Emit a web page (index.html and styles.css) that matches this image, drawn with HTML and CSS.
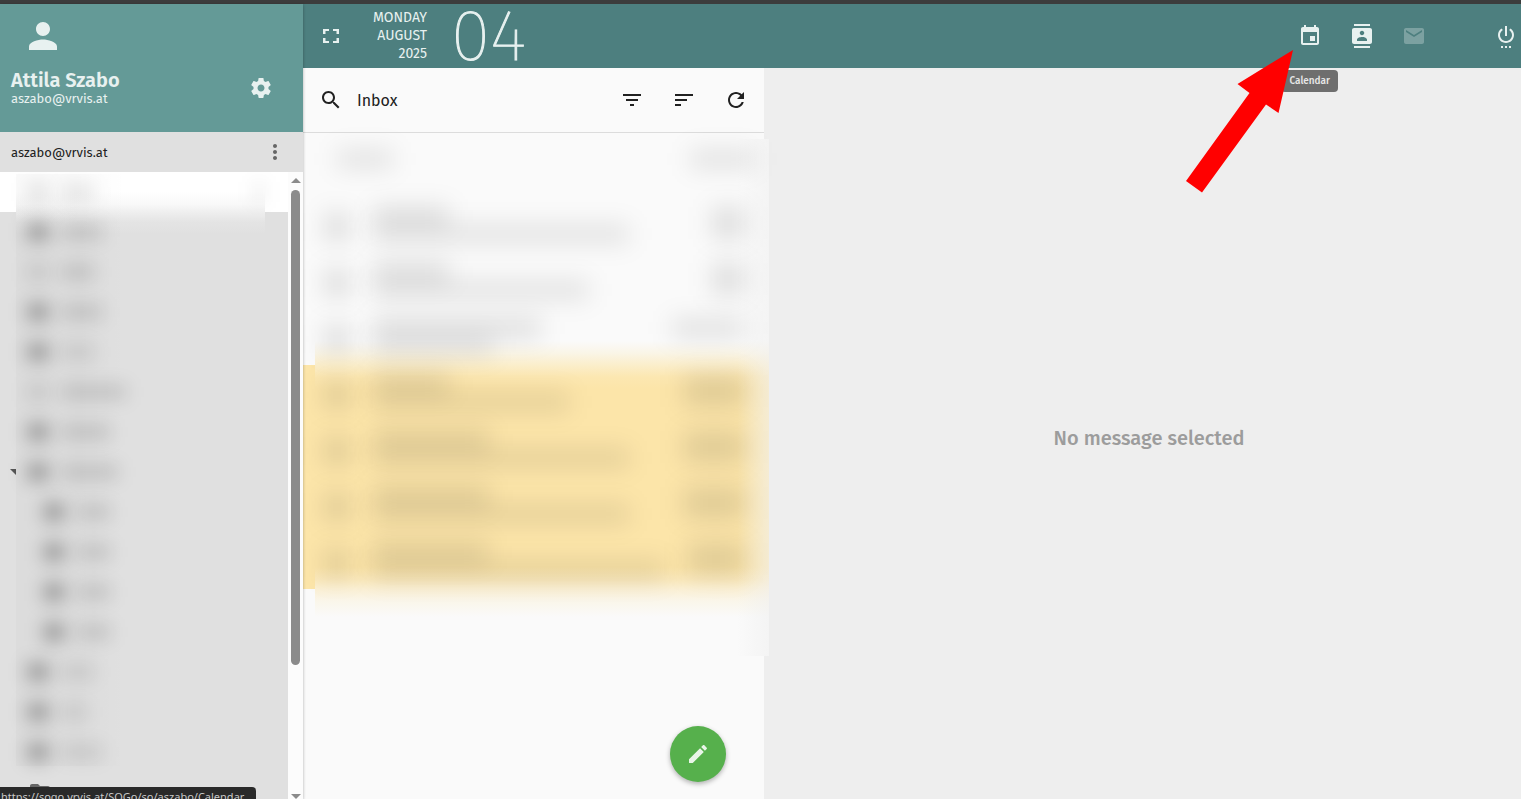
FILE: index.html
```html
<!DOCTYPE html>
<html lang="en">
<head>
<meta charset="utf-8">
<title>Inbox</title>
<link rel="stylesheet" href="styles.css">
</head>
<body>
<div class="app">
  <aside class="sidebar">
    <header class="profile">
      <svg class="avatar" viewBox="0 0 24 24" aria-hidden="true"><path d="M12 12c2.200 0 4-1.800 4-4s-1.800-4-4-4-4 1.800-4 4 1.800 4 4 4zm0 2c-2.700 0-8 1.300-8 4v2h16v-2c0-2.700-5.300-4-8-4z"/></svg>
      <div class="profile-row">
        <div class="identity">
          <strong class="name">Attila Szabo</strong>
          <span class="email">aszabo@vrvis.at</span>
        </div>
        <button class="icon-button light" aria-label="Preferences"><svg viewBox="0 0 24 24"><path d="M19.430 12.980c.04-.32.07-.64.07-.98s-.03-.66-.07-.98l2.110-1.650c.19-.15.24-.42.12-.64l-2-3.460c-.12-.22-.39-.3-.61-.22l-2.490 1c-.52-.4-1.080-.73-1.690-.98l-.38-2.650C14.460 2.180 14.250 2 14 2h-4c-.25 0-.46.18-.49.42l-.38 2.650c-.61.25-1.170.59-1.690.98l-2.490-1c-.23-.09-.49 0-.61.22l-2 3.460c-.13.22-.07.49.12.64l2.110 1.650c-.04.32-.07.65-.07.98s.03.66.07.98l-2.110 1.650c-.19.15-.24.42-.12.64l2 3.460c.12.22.39.3.61.22l2.490-1c.52.4 1.080.73 1.690.98l.38 2.650c.03.24.24.42.49.42h4c.25 0 .46-.18.49-.42l.38-2.650c.61-.25 1.170-.59 1.690-.98l2.490 1c.23.09.49 0 .61-.22l2-3.460c.12-.22.07-.49-.12-.64l-2.110-1.650zM12 15.500c-1.930 0-3.500-1.570-3.500-3.500s1.570-3.500 3.500-3.500 3.500 1.570 3.500 3.500-1.570 3.500-3.500 3.500z"/></svg></button>
      </div>
    </header>
    <div class="account">
      <span>aszabo@vrvis.at</span>
      <button class="icon-button more" aria-label="Account options"><svg viewBox="0 0 24 24"><path d="M12 8c1.100 0 2-.9 2-2s-.9-2-2-2-2 .9-2 2 .9 2 2 2zm0 2c-1.100 0-2 .9-2 2s.9 2 2 2 2-.9 2-2-.9-2-2-2zm0 6c-1.100 0-2 .9-2 2s.9 2 2 2 2-.9 2-2-.9-2-2-2z"/></svg></button>
    </div>
    <div class="folders">
      <div class="folder-veil"></div>
      <ul class="folder-list">
        <li class="active"><i class="pic pale"></i><i class="bar w32 pale"></i><i class="dots"></i></li>
        <li><i class="pic"></i><i class="bar w40"></i></li>
        <li><i class="pic pale"></i><i class="bar w32"></i></li>
        <li><i class="pic"></i><i class="bar w40"></i></li>
        <li><i class="pic"></i><i class="bar w32 pale"></i></li>
        <li><i class="pic pale"></i><i class="bar w64"></i></li>
        <li><i class="pic"></i><i class="bar w48"></i></li>
        <li class="open"><i class="pic"></i><i class="bar w56"></i></li>
        <li class="child"><i class="pic"></i><i class="bar w32"></i></li>
        <li class="child"><i class="pic"></i><i class="bar w32"></i></li>
        <li class="child"><i class="pic"></i><i class="bar w32"></i></li>
        <li class="child"><i class="pic"></i><i class="bar w32"></i></li>
        <li><i class="pic"></i><i class="bar w32 pale"></i></li>
        <li><i class="pic"></i><i class="bar w24 pale"></i></li>
        <li><i class="pic"></i><i class="bar w40 pale"></i></li>
        <li><svg class="folder" viewBox="0 0 24 24" aria-hidden="true"><path d="M10 4H4c-1.100 0-2 .9-2 2v12c0 1.100.9 2 2 2h16c1.100 0 2-.9 2-2V8c0-1.100-.9-2-2-2h-8z"/></svg></li>
      </ul>
      <div class="scrollbar"><i class="arrow up"></i><i class="thumb"></i><i class="arrow down"></i></div>
    </div>
  </aside>
  <div class="main">
    <header class="toolbar">
      <button class="icon-button light" aria-label="Full screen"><svg viewBox="0 0 24 24"><path d="M4 14v5h6v-2H6.500v-3zM4 10h2.500V7H10V5H4zM17.500 14v3H14v2h6v-5zM14 5v2h3.500v3H20V5z"/></svg></button>
      <div class="date"><span>MONDAY</span><span>AUGUST</span><span>2025</span></div>
      <div class="day">04</div>
      <nav class="modules">
        <a class="icon-button light calendar" href="#calendar" aria-label="Calendar"><svg viewBox="0 0 24 24"><path d="M17 12h-5v5h5zM16 1v2H8V1H6v2H5c-1.110 0-2 .9-2 2v14c0 1.100.89 2 2 2h14c1.100 0 2-.9 2-2V5c0-1.100-.9-2-2-2h-1V1zm3 18H5V8h14z"/></svg><span class="tooltip">Calendar</span></a>
        <a class="icon-button light" href="#contacts" aria-label="Address book"><svg viewBox="0 0 24 24"><path d="M20 0H4v2h16zM4 24h16v-2H4zM20 4H4c-1.100 0-2 .9-2 2v12c0 1.100.9 2 2 2h16c1.100 0 2-.9 2-2V6c0-1.100-.9-2-2-2zm-8 2.750c1.240 0 2.250 1.010 2.250 2.250s-1.010 2.250-2.250 2.250S9.750 10.240 9.750 9 10.760 6.750 12 6.750zM17 17H7v-1.500c0-1.670 3.330-2.500 5-2.500s5 .83 5 2.500z"/></svg></a>
        <a class="icon-button light dim" href="#mail" aria-label="Mail"><svg viewBox="0 0 24 24"><path d="M20 4H4c-1.100 0-2 .9-2 2v12c0 1.100.9 2 2 2h16c1.100 0 2-.9 2-2V6c0-1.100-.9-2-2-2zm0 4l-8 5-8-5V6l8 5 8-5z"/></svg></a>
      </nav>
      <button class="icon-button light" aria-label="Log out"><svg viewBox="0 0 24 24"><path d="M7 24h2v-2H7zm4 0h2v-2h-2zm2-22h-2v10h2zm3.560 2.440l-1.450 1.450C16.840 6.940 18 8.830 18 11c0 3.310-2.690 6-6 6s-6-2.690-6-6c0-2.170 1.160-4.060 2.880-5.120L7.440 4.440C5.360 5.880 4 8.280 4 11c0 4.420 3.580 8 8 8s8-3.580 8-8c0-2.720-1.360-5.120-3.440-6.560zM15 24h2v-2h-2z"/></svg></button>
    </header>
    <div class="panes">
      <section class="list-pane">
        <header class="list-header">
          <button class="icon-button" aria-label="Search"><svg viewBox="0 0 24 24"><path d="M15.500 14h-.79l-.28-.27C15.410 12.590 16 11.110 16 9.500 16 5.910 13.090 3 9.500 3S3 5.910 3 9.500 5.910 16 9.500 16c1.610 0 3.090-.59 4.230-1.570l.27.28v.79l5 4.990L20.490 19zm-6 0C7.010 14 5 11.990 5 9.500S7.010 5 9.500 5 14 7.010 14 9.500 11.990 14 9.500 14z"/></svg></button>
          <h1 class="title">Inbox</h1>
          <button class="icon-button" aria-label="Filter"><svg viewBox="0 0 24 24"><path d="M10 18h4v-2h-4zM3 6v2h18V6zm3 7h12v-2H6z"/></svg></button>
          <button class="icon-button" aria-label="Sort"><svg viewBox="0 0 24 24"><path d="M3 18h6v-2H3zM3 6v2h18V6zm0 7h12v-2H3z"/></svg></button>
          <button class="icon-button" aria-label="Refresh"><svg viewBox="0 0 24 24"><path d="M17.650 6.350C16.200 4.900 14.210 4 12 4c-4.420 0-7.990 3.580-7.990 8s3.570 8 7.990 8c3.730 0 6.840-2.550 7.730-6h-2.080c-.82 2.330-3.040 4-5.650 4-3.310 0-6-2.690-6-6s2.690-6 6-6c1.660 0 3.140.69 4.220 1.780L13 11h7V4z"/></svg></button>
        </header>
        <div class="messages">
          <div class="message-veil"></div>
          <div class="count-row"><i class="line c1"></i><i class="line c2"></i></div>
          <ul class="message-list">
            <li><i class="face"></i><div class="lines"><i class="line strong s1"></i><i class="line m4"></i></div><i class="stamp"></i></li>
            <li><i class="face"></i><div class="lines"><i class="line strong s1"></i><i class="line m3"></i></div><i class="stamp"></i></li>
            <li><i class="face"></i><div class="lines"><i class="line strong s3"></i><i class="line m1"></i></div><i class="stamp wide"></i></li>
            <li class="unread"><i class="face"></i><div class="lines"><i class="line strong s1"></i><i class="line m2"></i></div><i class="stamp mid"></i></li>
            <li class="unread"><i class="face"></i><div class="lines"><i class="line strong s2"></i><i class="line m4"></i></div><i class="stamp mid"></i></li>
            <li class="unread"><i class="face"></i><div class="lines"><i class="line strong s2"></i><i class="line m4"></i></div><i class="stamp mid"></i></li>
            <li class="unread"><i class="face"></i><div class="lines"><i class="line strong s2"></i><i class="line m5"></i></div><i class="stamp mid"></i></li>
          </ul>
        </div>
        <button class="compose" aria-label="Write a new message"><svg viewBox="0 0 24 24"><path d="M3 17.250V21h3.750L17.810 9.940l-3.750-3.750zM20.710 7.040c.39-.39.39-1.020 0-1.410l-2.340-2.340c-.39-.39-1.020-.39-1.410 0l-1.830 1.830 3.750 3.750z"/></svg></button>
      </section>
      <main class="reader"><p>No message selected</p></main>
    </div>
  </div>
</div>
<svg class="pointer" viewBox="0 0 110 144" aria-hidden="true"><path d="M108 0L93.500 63 81 54.500 17 142.500 1 131 64.500 43 52.500 34z"/></svg>
<div class="status">https://sogo.vrvis.at/SOGo/so/aszabo/Calendar</div>
</body>
</html>
```
FILE: styles.css
```css
* { box-sizing: border-box; }
body {
  margin: 0;
  height: 100vh;
  overflow: hidden;
  font-family: "Fira Sans", "Noto Sans", sans-serif;
  font-size: 16px;
  color: #212121;
  background: #eee;
}
ul { list-style: none; margin: 0; padding: 0; }
svg { display: block; fill: currentColor; }
.app { display: flex; height: 100vh; border-top: 4px solid #3c3c3c; }

.icon-button {
  display: flex;
  align-items: center;
  justify-content: center;
  flex: none;
  width: 40px;
  height: 40px;
  padding: 0;
  border: 0;
  background: none;
  color: #212121;
}
.icon-button svg { width: 24px; height: 24px; }
.light { color: #e8f1f0; }

.sidebar {
  position: relative;
  z-index: 1;
  flex: none;
  display: flex;
  flex-direction: column;
  width: 303px;
  background: #e0e0e0;
  box-shadow: 0 1px 3px rgba(0, 0, 0, .3);
}
.profile {
  height: 128px;
  padding: 11px 22px 0 11px;
  background: #649a97;
  color: #e8f1f0;
}
.avatar { width: 42px; height: 42px; margin-left: 11px; }
.profile-row { display: flex; justify-content: space-between; align-items: center; height: 62px; }
.identity { display: flex; flex-direction: column; }
.name { font-size: 20px; line-height: 22px; font-weight: 600; }
.email { font-size: 13px; line-height: 16px; }
.account {
  display: flex;
  align-items: center;
  justify-content: space-between;
  height: 40px;
  padding: 0 8px 0 11px;
  font-size: 13px;
}
.more { color: #666; }

.folders { position: relative; display: flex; flex: 1; min-height: 0; overflow: hidden; }
.folder-list { flex: 1; }
.folder-list li { display: flex; align-items: center; gap: 14px; height: 40px; padding-left: 28px; }
.folder-list .active { background: #fff; }
.folder-list .child { padding-left: 44px; }
.folder-list .open { padding-left: 10px; gap: 6px; }
.open::before { content: ""; border: 6px solid transparent; border-top-color: #555; border-bottom: 0; }
.open .bar { margin-left: 8px; }
.pic, .bar, .dots { filter: blur(9px); }
.pic { width: 20px; height: 18px; background: rgba(0, 0, 0, .32); }
.bar { height: 14px; background: rgba(0, 0, 0, .14); }
.pale { background: rgba(0, 0, 0, .1); }
.dots { width: 6px; height: 20px; margin: 0 26px 0 auto; background: rgba(0, 0, 0, .12); }
.w24 { width: 24px; }
.w32 { width: 32px; }
.w40 { width: 40px; }
.w48 { width: 48px; }
.w56 { width: 56px; }
.w64 { width: 64px; }
.folder { width: 24px; height: 24px; color: #666; }

.folder-veil {
  position: absolute;
  top: 2px;
  left: 16px;
  right: 38px;
  height: 592px;
  background:
    linear-gradient(90deg, rgba(0, 0, 0, .02), rgba(0, 0, 0, .02) 60px, transparent 110px),
    linear-gradient(#fff 18px, #f9f9f9 30px, #efefef 38px, #e4e4e4 48px, #e0e0e0 60px);
}

.scrollbar {
  display: flex;
  flex-direction: column;
  align-items: center;
  flex: none;
  width: 15px;
  padding-top: 6px;
  background: #fcfcfc;
}
.arrow { border: 5px solid transparent; }
.up { border-top: 0; border-bottom-color: #8b8b8b; }
.down { border-bottom: 0; border-top-color: #8b8b8b; margin-top: auto; }
.thumb { width: 9px; height: 475px; margin-top: 7px; border-radius: 5px; background: #8b8b8b; }

.main { flex: 1; min-width: 0; display: flex; flex-direction: column; }
.toolbar {
  display: flex;
  align-items: center;
  flex: none;
  height: 64px;
  padding-left: 8px;
  background: #4d7f7f;
  color: #e8f1f0;
}
.toolbar > .icon-button:last-child { margin-right: -5px; }
.date {
  display: flex;
  flex-direction: column;
  width: 76px;
  font-size: 14px;
  line-height: 18px;
  text-align: right;
}
.day {
  margin-left: 24px;
  font-family: "Fira Sans", Lato, sans-serif;
  font-size: 72px;
  line-height: 64px;
  font-weight: 100;
  -webkit-text-stroke: 1px currentColor;
}
.modules { display: flex; gap: 12px; margin-left: auto; margin-right: 52px; }
.calendar { position: relative; text-decoration: none; }
.dim { opacity: .3; }
.tooltip {
  position: absolute;
  top: 54px;
  right: -8px;
  z-index: 2;
  padding: 0 8px;
  border-radius: 4px;
  background: #6e6e6e;
  color: #e8e8e8;
  font-size: 10px;
  line-height: 22px;
  font-weight: 500;
}
.panes { display: flex; flex: 1; min-height: 0; }
.list-pane { position: relative; flex: none; width: 38%; max-width: 461px; background: #fafafa; }
.list-header {
  display: flex;
  align-items: center;
  height: 65px;
  padding: 0 8px;
  border-bottom: 1px solid #dcdcdc;
}
.list-header .icon-button + .icon-button { margin-left: 12px; }
.title { flex: 1; margin: 0 0 0 6px; font-size: 16px; font-weight: 400; }

.messages { position: relative; }
.count-row { display: flex; justify-content: space-between; align-items: center; height: 64px; padding: 0 10px 12px 34px; }
.message-list li { display: flex; gap: 24px; height: 56px; padding: 10px 20px 0 22px; }
.message-list .unread { background: #fce5a9; }
.face, .line, .stamp { filter: blur(12px); }
.face { width: 24px; height: 28px; margin-top: 6px; background: rgba(0, 0, 0, .12); }
.lines { flex: 1; }
.line { display: block; height: 18px; background: rgba(0, 0, 0, .1); }
.strong { background: rgba(0, 0, 0, .12); }
.stamp { width: 32px; height: 32px; background: rgba(0, 0, 0, .11); }
.mid { width: 60px; }
.wide { width: 72px; height: 18px; }
.c1 { width: 56px; }
.c2 { width: 64px; }
.s1 { width: 76px; }
.s2 { width: 116px; }
.s3 { width: 168px; }
.m1 { width: 120px; }
.m2 { width: 196px; }
.m3 { width: 216px; }
.m4 { width: 256px; }
.m5 { width: 292px; }
.message-veil {
  position: absolute;
  top: 6px;
  left: 12px;
  right: -5px;
  height: 517px;
  background:
    linear-gradient(90deg, transparent calc(100% - 32px), rgba(240, 240, 240, .6)),
    linear-gradient(#fafafa 202px, #faf5e7 214px, #fbeecb 226px, #fce7b1 238px, #fce5a9 250px, #fce5a9 428px, #fbe9bb 440px, #fbf0d4 450px, #faf6ea 462px, #fafafa 478px);
}
.compose {
  position: absolute;
  right: 38px;
  bottom: 17px;
  display: flex;
  align-items: center;
  justify-content: center;
  width: 56px;
  height: 56px;
  padding: 0;
  border: 0;
  border-radius: 50%;
  background: #56b04c;
  color: #e9f5e8;
  box-shadow: 0 2px 5px rgba(0, 0, 0, .3);
}
.compose svg { width: 24px; height: 24px; }
.reader { flex: 1; display: flex; align-items: center; justify-content: center; padding: 9px 0 0 13px; }
.reader p { margin: 0; color: #9c9c9c; font-size: 20px; line-height: 24px; font-weight: 500; }

.pointer { position: absolute; top: 50px; right: 226px; z-index: 3; width: 110px; height: 144px; fill: #f00; }
.status {
  position: absolute;
  left: 0;
  bottom: -8px;
  z-index: 2;
  height: 20px;
  padding: 0 12px 0 1px;
  border-radius: 0 4px 0 0;
  background: #292929;
  color: #c8c8c8;
  font-family: "Noto Sans", sans-serif;
  font-size: 11px;
  line-height: 20px;
}
```
